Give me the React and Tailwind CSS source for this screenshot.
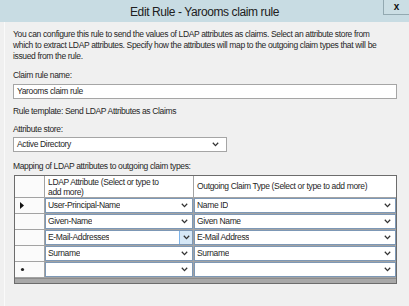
import React from "react";

const Chevron = () => (
  <svg width="7" height="5" viewBox="0 0 7 5" className="shrink-0">
    <path d="M0.8 0.8 L3.5 3.6 L6.2 0.8" fill="none" stroke="#333" strokeWidth="1.3" />
  </svg>
);

function Cell({ text, hot, last }) {
  return (
    <div className={`h-[16px] border-b border-[#a3a3a3] ${last ? "" : "border-r"} bg-white flex`}>
      <div className="flex-1 border border-[#7d98b6] flex items-center justify-between pl-[2px] pr-[4px] min-w-0">
        <span className="truncate">{text}</span>
        {hot ? (
          <div className="h-full w-[13px] -mr-[4px] bg-[#d6e8f7] border-l border-[#7eb4ea] flex items-center justify-center">
            <Chevron />
          </div>
        ) : (
          <Chevron />
        )}
      </div>
    </div>
  );
}

function RowHead({ mark }) {
  return (
    <div className="h-[16px] border-b border-r border-[#a3a3a3] bg-[#fbfbfb] flex items-center pl-[5px]">
      {mark === "arrow" && (
        <svg width="4" height="7" viewBox="0 0 4 7">
          <path d="M0 0 L4 3.5 L0 7 Z" fill="#111" />
        </svg>
      )}
      {mark === "star" && (
        <svg width="5" height="5" viewBox="0 0 5 5">
          <circle cx="2.5" cy="2.5" r="1.6" fill="#222" />
        </svg>
      )}
    </div>
  );
}

const rows = [
  { a: "User-Principal-Name", b: "Name ID", mark: "arrow" },
  { a: "Given-Name", b: "Given Name" },
  { a: "E-Mail-Addresses", b: "E-Mail Address", hot: true },
  { a: "Surname", b: "Surname" },
  { a: "", b: "", mark: "star" },
];

export default function App() {
  return (
    <div
      className="w-[409px] h-[306px] bg-[#f0f0f0] overflow-hidden text-[#262626] flex flex-col"
      style={{ fontFamily: '"Liberation Sans", Arial, sans-serif' }}
    >
      <div className="h-[22px] bg-[#c8dce3] relative flex items-center justify-center shrink-0">
        <span className="text-[12px] tracking-[-0.4px] leading-none text-[#202020] mt-[1px]">
          Edit Rule - Yarooms claim rule
        </span>
        <div className="absolute right-0 top-0 w-[26px] h-[15px] border-l border-b border-[#93a9b1] bg-[#cbdee4] flex items-center justify-center">
          <span className="text-[10px] font-bold leading-none text-[#111]">x</span>
        </div>
      </div>
      <div className="flex-1 border-l border-[#fafafa] ml-[4px] pl-[8px] pr-[12px] pt-[7px] text-[8.5px] tracking-[-0.35px] leading-[11px]">
        <p className="whitespace-nowrap">
          You can configure this rule to send the values of LDAP attributes as claims. Select an attribute store from
          <br />
          which to extract LDAP attributes. Specify how the attributes will map to the outgoing claim types that will be
          <br />
          issued from the rule.
        </p>
        <div className="mt-[8px]">Claim rule name:</div>
        <div className="mt-[3px] h-[15px] border border-[#a5a5a5] bg-white flex items-center pl-[3px]">
          Yarooms claim rule
        </div>
        <div className="mt-[7px]">Rule template: Send LDAP Attributes as Claims</div>
        <div className="mt-[7px]">Attribute store:</div>
        <div className="mt-[2px] w-[214px] h-[15px] border border-[#a5a5a5] bg-white flex items-center justify-between pl-[3px] pr-[7px]">
          <span>Active Directory</span>
          <Chevron />
        </div>
        <div className="mt-[9px]">Mapping of LDAP attributes to outgoing claim types:</div>
        <div className="mt-[3px] ml-[1px] border border-[#6c6c6c] bg-[#fbfbfb]">
          <div className="grid grid-cols-[30px_149px_1fr]">
            <div className="h-[22px] border-b border-r border-[#a3a3a3] bg-[#fbfbfb]" />
            <div className="h-[22px] border-b border-r border-[#a3a3a3] bg-white pl-[3px] pt-[1px] leading-[10px]">
              LDAP Attribute (Select or type to
              <br />
              add more)
            </div>
            <div className="h-[22px] border-b border-[#a3a3a3] bg-white pl-[3px] flex items-center">
              Outgoing Claim Type (Select or type to add more)
            </div>
            {rows.map((r, i) => (
              <React.Fragment key={i}>
                <RowHead mark={r.mark} />
                <Cell text={r.a} hot={r.hot} />
                <Cell text={r.b} last />
              </React.Fragment>
            ))}
          </div>
          <div className="h-[5px] bg-[#a8a8a8] border-t border-[#8c8c8c]" />
        </div>
      </div>
    </div>
  );
}
